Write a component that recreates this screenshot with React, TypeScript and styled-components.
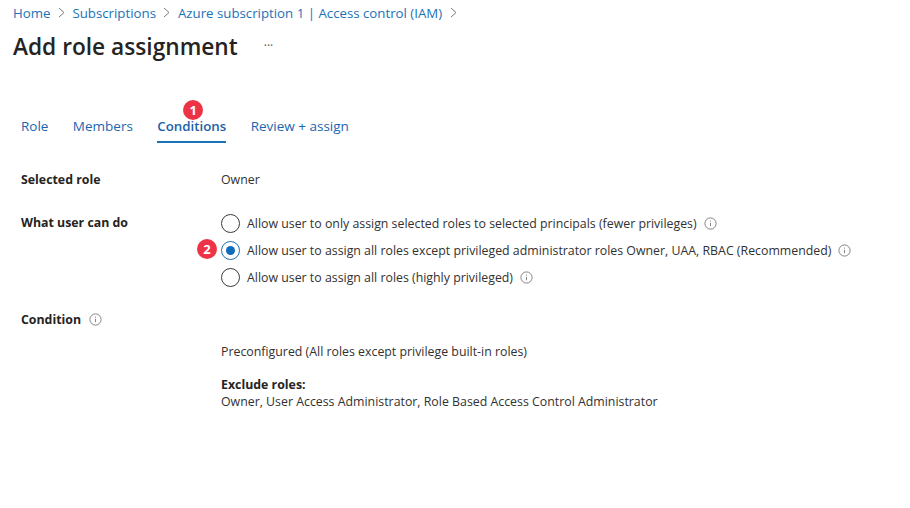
import React from 'react';
import styled, { createGlobalStyle } from 'styled-components';

const GlobalStyle = createGlobalStyle`
	html, body {
		margin: 0;
		padding: 0;
		background: #fff;
	}
	body {
		font-family: 'Open Sans', 'Noto Sans', sans-serif;
		font-size: 12.35px;
		color: #323130;
	}
`;

const Page = styled.div`
	width: 910px;
	height: 508px;
	overflow: hidden;
	box-sizing: border-box;
	padding: 3px 13px 0;
`;
const Breadcrumb = styled.nav`
	display: flex;
	align-items: center;
	gap: 7.5px;
	height: 19px;
`;
const Crumb = styled.span`
	font-size: 13.25px;
	color: #1a72b8;
	white-space: nowrap;
`;
const Header = styled.div`
	display: flex;
	align-items: center;
	margin-top: 7px;
	height: 34px;
`;
const Title = styled.h1`
	margin: 0;
	font-size: 22.7px;
	font-weight: 600;
	color: #252423;
`;
const More = styled.span`
	margin-left: 26px;
	font-size: 12px;
	color: #555;
	line-height: 1;
`;
const Tabs = styled.div`
	display: flex;
	gap: 24.4px;
	margin-top: 47px;
	padding-left: 8px;
`;
const Tab = styled.div<{ $active?: boolean }>`
	position: relative;
	height: 31px;
	line-height: 32px;
	font-size: ${(p) => (p.$active ? '13.3px' : '13.5px')};
	font-weight: ${(p) => (p.$active ? 600 : 400)};
	color: ${(p) => (p.$active ? '#1b5fa8' : '#1a66b0')};
	border-bottom: 2px solid ${(p) => (p.$active ? '#1a72b8' : 'transparent')};
`;
const Badge = styled.span`
	position: absolute;
	width: 20px;
	height: 20px;
	border-radius: 50%;
	background: #ef3346;
	color: #fff;
	font-size: 13px;
	font-weight: 700;
	line-height: 20px;
	text-align: center;
`;
const TabBadge = styled(Badge)`
	top: -10px;
	left: 26px;
`;
const Form = styled.div`
	display: grid;
	grid-template-columns: 200px 1fr;
	margin-top: 26px;
	padding-left: 8px;
	row-gap: 23px;
`;
const Label = styled.div`
	display: flex;
	align-items: center;
	gap: 8px;
	height: 20px;
	font-weight: 700;
	color: #252423;
`;
const ConditionLabel = styled(Label)`
	grid-column: 1 / -1;
`;
const Value = styled.div`
	padding-top: 1px;
	margin-bottom: -1px;
	line-height: 20px;
`;
const Options = styled.div`
	display: flex;
	flex-direction: column;
	gap: 7px;
	margin: 1px 0 -1px;
`;
const Option = styled.label`
	position: relative;
	display: flex;
	align-items: center;
	gap: 7px;
	height: 20px;
	white-space: nowrap;
`;
const OptionBadge = styled(Badge)`
	top: -1px;
	left: -24px;
`;
const Radio = styled.span<{ $checked?: boolean }>`
	box-sizing: border-box;
	display: flex;
	align-items: center;
	justify-content: center;
	width: 19px;
	height: 19px;
	border-radius: 50%;
	border: 1.5px solid ${(p) => (p.$checked ? '#1a72b8' : '#3b3a39')};
	&::after {
		content: '';
		display: ${(p) => (p.$checked ? 'block' : 'none')};
		width: 9px;
		height: 9px;
		border-radius: 50%;
		background: #0f6cbd;
	}
`;
const ConditionBody = styled.div`
	grid-column: 2;
	margin-top: -11px;
`;
const Exclude = styled.div`
	margin-top: 15px;
	line-height: 17px;
`;
const Strong = styled.div`
	font-weight: 700;
	color: #252423;
`;

const Chevron = () => (
	<svg width="7" height="11" viewBox="0 0 7 11" fill="none" stroke="#7a7a7a" strokeWidth="1">
		<path d="M1 1l5 4.5L1 10" />
	</svg>
);

const Info = () => (
	<svg width="13" height="13" viewBox="0 0 13 13" fill="none" stroke="#777" strokeWidth="0.9">
		<circle cx="6.5" cy="6.5" r="5.6" />
		<path d="M6.5 5.8v3.4M6.5 3.6v1" />
	</svg>
);

const crumbs = ['Home', 'Subscriptions', 'Azure subscription 1 | Access control (IAM)'];

const App: React.FC = () => (
	<>
		<GlobalStyle />
		<Page>
			<Breadcrumb>
				{crumbs.map((c) => (
					<React.Fragment key={c}>
						<Crumb>{c}</Crumb>
						<Chevron />
					</React.Fragment>
				))}
			</Breadcrumb>
			<Header>
				<Title>Add role assignment</Title>
				<More>···</More>
			</Header>
			<Tabs>
				<Tab>Role</Tab>
				<Tab>Members</Tab>
				<Tab $active>
					<TabBadge>1</TabBadge>
					Conditions
				</Tab>
				<Tab>Review + assign</Tab>
			</Tabs>
			<Form>
				<Label>Selected role</Label>
				<Value>Owner</Value>
				<Label>What user can do</Label>
				<Options>
					<Option>
						<Radio />
						Allow user to only assign selected roles to selected principals (fewer privileges)
						<Info />
					</Option>
					<Option>
						<OptionBadge>2</OptionBadge>
						<Radio $checked />
						Allow user to assign all roles except privileged administrator roles Owner, UAA, RBAC (Recommended)
						<Info />
					</Option>
					<Option>
						<Radio />
						Allow user to assign all roles (highly privileged)
						<Info />
					</Option>
				</Options>
				<ConditionLabel>
					Condition
					<Info />
				</ConditionLabel>
				<ConditionBody>
					<Value>Preconfigured (All roles except privilege built-in roles)</Value>
					<Exclude>
						<Strong>Exclude roles:</Strong>
						Owner, User Access Administrator, Role Based Access Control Administrator
					</Exclude>
				</ConditionBody>
			</Form>
		</Page>
	</>
);

export default App;
